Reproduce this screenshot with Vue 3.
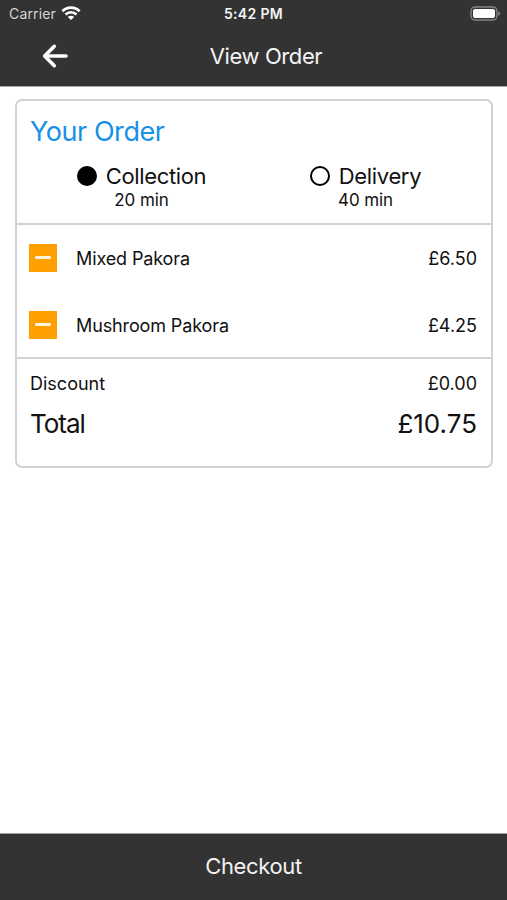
<script setup>
const options = [
  { name: 'Collection', time: '20 min', selected: true },
  { name: 'Delivery', time: '40 min', selected: false },
]
const items = [
  { name: 'Mixed Pakora', price: '£6.50' },
  { name: 'Mushroom Pakora', price: '£4.25' },
]
</script>

<template>
  <div class="screen">
    <header class="top">
      <div class="status">
        <div class="carrier">
          <span>Carrier</span>
          <svg class="wifi" width="20" height="15" viewBox="0 0 20 15">
            <g fill="none" stroke="#fff" stroke-width="2.7">
              <path d="M1.4 5.3C6.2.5 13.8.5 18.6 5.3" />
              <path d="M4.5 8.5C7.6 5.5 12.4 5.5 15.5 8.5" />
            </g>
            <path d="M6.8 10.9C8.6 9.2 11.4 9.2 13.2 10.9L10 14.1Z" fill="#fff" />
          </svg>
        </div>
        <span class="clock">5:42 PM</span>
        <svg class="battery" width="31" height="16" viewBox="0 0 31 16">
          <rect x="1" y="1" width="26" height="13" rx="4" fill="none" stroke="#858585" stroke-width="1.4" />
          <rect x="3" y="3" width="22" height="9" rx="2" fill="#fff" />
          <path d="M28.3 5.2C30.6 6 30.6 9 28.3 9.8Z" fill="#858585" />
        </svg>
      </div>
      <div class="nav">
        <svg class="back" width="28" height="26" viewBox="0 0 28 26">
          <path d="M13.3 3.3L3.6 13L13.3 22.7M4 13H25" fill="none" stroke="#fff" stroke-width="3.6" stroke-linecap="round" stroke-linejoin="round" />
        </svg>
        <h1>View Order</h1>
      </div>
    </header>

    <main>
      <section class="card">
        <div class="summary">
          <h2>Your Order</h2>
          <div class="options">
            <div v-for="o in options" :key="o.name" class="option">
              <div class="choice">
                <span class="radio" :class="{ on: o.selected }"></span>
                <span class="label">{{ o.name }}</span>
              </div>
              <div class="time">{{ o.time }}</div>
            </div>
          </div>
        </div>
        <div class="items">
          <div v-for="i in items" :key="i.name" class="item">
            <span class="minus"><i></i></span>
            <span class="name">{{ i.name }}</span>
            <span>{{ i.price }}</span>
          </div>
        </div>
        <div class="totals">
          <div class="discount"><span>Discount</span><span>£0.00</span></div>
          <div class="total"><span class="total-label">Total</span><span>£10.75</span></div>
        </div>
      </section>
    </main>

    <footer>Checkout</footer>
  </div>
</template>

<style>
body {
  background: #fff;
}
</style>

<style scoped>
.screen {
  display: flex;
  flex-direction: column;
  height: 900px;
  overflow: hidden;
  font-family: Inter, 'Liberation Sans', sans-serif;
  font-size: 18px;
  color: #111;
  white-space: nowrap;
}
.top {
  box-sizing: border-box;
  height: 87px;
  border-bottom: 1px solid #a8a8a8;
  background: #333;
  color: #f4f4f4;
}
.status {
  display: grid;
  grid-template-columns: 1fr auto 1fr;
  align-items: center;
  height: 27px;
  padding: 0 6px 0 9px;
}
.carrier {
  display: flex;
  align-items: center;
  gap: 5px;
  font-size: 14px;
  letter-spacing: 0.15px;
  color: #d4d4d4;
}
.clock {
  margin-right: 3px;
  font-size: 14px;
  font-weight: 600;
  letter-spacing: 0.35px;
}
.battery {
  justify-self: end;
}
.nav {
  display: grid;
  grid-template-columns: 1fr auto 1fr;
  align-items: center;
  height: 58px;
}
.back {
  margin-left: 41px;
}
h1,
h2 {
  margin: 0;
  font-weight: 400;
}
h1 {
  grid-column: 2;
  margin-left: 25px;
  font-size: 22px;
  letter-spacing: -0.4px;
}
main {
  flex: 1;
  padding: 12px 14px 0 15px;
}
.card {
  box-sizing: border-box;
  height: 369px;
  border: 2px solid #d2d2d2;
  border-radius: 7px;
}
.summary {
  box-sizing: border-box;
  height: 124px;
  padding-top: 14px;
  border-bottom: 2px solid #d2d2d2;
}
h2 {
  padding-left: 13px;
  font-size: 27px;
  line-height: 34px;
  letter-spacing: -0.45px;
  color: #1791e6;
}
.options {
  display: grid;
  grid-template-columns: 249px 199px;
  padding-top: 14px;
}
.option {
  display: flex;
  flex-direction: column;
  align-items: center;
}
.choice {
  display: flex;
  align-items: center;
  gap: 9px;
  height: 26px;
  font-size: 22px;
  letter-spacing: -0.35px;
}
.radio {
  box-sizing: border-box;
  width: 20px;
  height: 20px;
  border: 2px solid #000;
  border-radius: 50%;
}
.radio.on {
  background: #000;
}
.time {
  font-size: 17px;
  line-height: 22px;
  letter-spacing: -0.1px;
}
.items {
  box-sizing: border-box;
  height: 134px;
  border-bottom: 2px solid #d2d2d2;
}
.item {
  display: flex;
  align-items: center;
  height: 67px;
  padding: 0 14px 0 12px;
}
.minus {
  display: flex;
  align-items: center;
  justify-content: center;
  width: 28px;
  height: 28px;
  margin-bottom: 2px;
  background: #ffa000;
}
.minus i {
  width: 16px;
  height: 3px;
  border-radius: 1px;
  background: #fff3dc;
}
.name {
  flex: 1;
  padding-left: 19px;
  letter-spacing: -0.12px;
}
.discount,
.total {
  display: flex;
  justify-content: space-between;
  padding: 0 14px 0 13px;
}
.discount {
  padding-top: 13px;
  line-height: 24px;
}
.total {
  padding-top: 11px;
  font-size: 26px;
  line-height: 34px;
}
.total-label {
  letter-spacing: -1px;
}
footer {
  box-sizing: border-box;
  height: 67px;
  border-top: 1px solid #a0a0a0;
  background: #333;
  color: #f2f2f2;
  font-size: 22px;
  line-height: 65px;
  letter-spacing: -0.35px;
  text-align: center;
}
</style>
